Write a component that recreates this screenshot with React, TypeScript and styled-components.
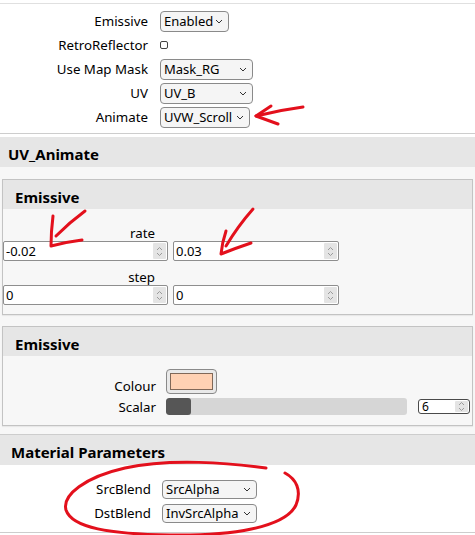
import React from "react";
import styled, { createGlobalStyle } from "styled-components";

const GlobalStyle = createGlobalStyle`
  html, body { margin: 0; padding: 0; background: #fff; }
  body {
    font-family: "Noto Sans", "Open Sans", sans-serif;
    font-size: 13px;
    color: #000;
  }
  * { box-sizing: border-box; }
`;

const Page = styled.div`
  position: relative;
  width: 475px;
  height: 535px;
  padding-top: 3px;
  overflow: hidden;
  background: #fff;
`;

const TopSection = styled.div`
  border-top: 1px solid #e0e0e0;
  border-bottom: 1px solid #cdcdcd;
  padding: 5px 0 4px;
  background: #fff;
`;

const FieldRow = styled.div<{ $labelW: number; $gap: number }>`
  display: grid;
  grid-template-columns: ${(p) => p.$labelW}px auto;
  column-gap: ${(p) => p.$gap}px;
  align-items: center;
  height: 24px;
`;

const Label = styled.span<{ $end?: boolean }>`
  text-align: right;
  white-space: nowrap;
  line-height: 16px;
  font-size: 13.3px;
  align-self: ${(p) => (p.$end ? "end" : "center")};
`;

const SelectBox = styled.div<{ $w: number; $h: number }>`
  display: flex;
  align-items: center;
  justify-content: space-between;
  width: ${(p) => p.$w}px;
  height: ${(p) => p.$h}px;
  border: 1px solid #8a8a8a;
  border-radius: 4px;
  background: #f5f5f5;
  padding: 0 5px 0 3px;
  font-size: 13px;
  line-height: 1;
  white-space: nowrap;
`;

const Check = styled.span`
  display: block;
  width: 8px;
  height: 8px;
  border: 1px solid #444;
  border-radius: 2px;
  background: #fff;
`;

const Section = styled.div<{ $gapTop?: number }>`
  padding-top: ${(p) => p.$gapTop ?? 0}px;
  background: #fff;
`;

const SectionHeader = styled.div<{ $indent: number }>`
  display: flex;
  align-items: center;
  height: 30px;
  padding: 4px ${(p) => p.$indent}px 0;
  background: #e6e6e6;
  font-weight: 700;
  font-size: 15px;
`;

const SectionBody = styled.div`
  display: flex;
  flex-direction: column;
  gap: 11px;
  padding: 12px 2px 8px;
  background: #f7f7f7;
`;

const MaterialSection = styled.div`
  border-top: 1px solid #cdcdcd;
  border-bottom: 1px solid #cdcdcd;
  background: #fff;
`;

const MaterialBody = styled.div`
  padding: 12px 0 7px;
`;

const Box = styled.div`
  border: 1px solid #c3c3c3;
  background: #f7f7f7;
  box-shadow: 0 1px 1px rgba(0, 0, 0, 0.06);
`;

const BoxHeader = styled.div`
  display: flex;
  align-items: center;
  height: 29px;
  padding: 4px 12px 0;
  background: #e6e6e6;
  font-weight: 700;
  font-size: 15px;
`;

const RateBody = styled.div`
  display: flex;
  flex-direction: column;
  gap: 8px;
  padding: 16px 0 9px;
`;

const ParamGroup = styled.div`
  display: flex;
  flex-direction: column;
`;

const ParamLabel = styled.div`
  width: 152px;
  text-align: right;
  line-height: 16px;
  font-size: 13.3px;
`;

const InputPair = styled.div`
  display: flex;
  gap: 5px;
`;

const NumberBox = styled.div<{ $w: number; $h: number; $small?: boolean }>`
  display: flex;
  align-items: center;
  justify-content: space-between;
  width: ${(p) => p.$w}px;
  height: ${(p) => p.$h}px;
  border: 1px solid ${(p) => (p.$small ? "#4a4a4a" : "#8e8e8e")};
  border-radius: ${(p) => (p.$small ? 3 : 2)}px;
  background: #fff;
  padding: 0 1px 0 ${(p) => (p.$small ? 3 : 2)}px;
  font-size: ${(p) => (p.$small ? 12 : 13)}px;
  line-height: 1;
`;

const Spinner = styled.span<{ $h: number }>`
  display: flex;
  align-items: center;
  justify-content: center;
  width: 13px;
  height: ${(p) => p.$h}px;
  background: #e4e4e4;
  border-radius: 1px;
`;

const ColourBody = styled.div`
  display: grid;
  grid-template-columns: 153px 1fr;
  column-gap: 10px;
  row-gap: 4px;
  padding: 13px 2px 10px 0;
`;

const Swatch = styled.div`
  width: 51px;
  height: 25px;
  border: 1px solid #8a8a8a;
  border-radius: 4px;
  background: #e9e9e9;
  padding: 3px;
`;

const SwatchFill = styled.div<{ $color: string }>`
  width: 100%;
  height: 100%;
  background: ${(p) => p.$color};
  border: 1px solid #806858;
`;

const SliderRow = styled.div`
  display: flex;
  align-items: center;
  gap: 11px;
  height: 17px;
`;

const Track = styled.div`
  flex: 1;
  height: 17px;
  background: #d6d6d6;
  border-radius: 3px;
  overflow: hidden;
  display: flex;
`;

const Thumb = styled.div`
  width: 25px;
  height: 100%;
  background: #565656;
  border-radius: 3px;
`;

const Overlay = styled.svg`
  position: absolute;
  left: 0;
  top: 0;
  pointer-events: none;
`;

const Chevron = () => (
  <svg width="8" height="5" viewBox="0 0 8 5">
    <path d="M1 1 L4 4 L7 1" fill="none" stroke="#333" strokeWidth="1" />
  </svg>
);

const SpinGlyph = () => (
  <svg width="7" height="11" viewBox="0 0 7 11">
    <path d="M1 4 L3.5 1.5 L6 4 M1 7 L3.5 9.5 L6 7" fill="none" stroke="#9a9a9a" strokeWidth="1" />
  </svg>
);

const Select = ({ value, w, h }: { value: string; w: number; h: number }) => (
  <SelectBox $w={w} $h={h}>
    <span>{value}</span>
    <Chevron />
  </SelectBox>
);

const NumberInput = ({ value, w, h, small }: { value: string; w: number; h: number; small?: boolean }) => (
  <NumberBox $w={w} $h={h} $small={small}>
    <span>{value}</span>
    <Spinner $h={h - 4}>
      <SpinGlyph />
    </Spinner>
  </NumberBox>
);

const topFields: { label: string; value?: string; w?: number; check?: boolean }[] = [
  { label: "Emissive", value: "Enabled", w: 69 },
  { label: "RetroReflector", check: true },
  { label: "Use Map Mask", value: "Mask_RG", w: 93 },
  { label: "UV", value: "UV_B", w: 93 },
  { label: "Animate", value: "UVW_Scroll", w: 90 },
];

const rateGroups = [
  { label: "rate", values: ["-0.02", "0.03"] },
  { label: "step", values: ["0", "0"] },
];

export default function App() {
  return (
    <>
      <GlobalStyle />
      <Page>
        <TopSection>
          {topFields.map((f) => (
            <FieldRow key={f.label} $labelW={148} $gap={12}>
              <Label>{f.label}</Label>
              {f.check ? <Check /> : <Select value={f.value!} w={f.w!} h={21} />}
            </FieldRow>
          ))}
        </TopSection>

        <Section $gapTop={3}>
          <SectionHeader $indent={8}>UV_Animate</SectionHeader>
          <SectionBody>
            <Box>
              <BoxHeader>Emissive</BoxHeader>
              <RateBody>
                {rateGroups.map((g) => (
                  <ParamGroup key={g.label}>
                    <ParamLabel>{g.label}</ParamLabel>
                    <InputPair>
                      <NumberInput value={g.values[0]} w={165} h={20} />
                      <NumberInput value={g.values[1]} w={166} h={20} />
                    </InputPair>
                  </ParamGroup>
                ))}
              </RateBody>
            </Box>
            <Box>
              <BoxHeader>Emissive</BoxHeader>
              <ColourBody>
                <Label $end>Colour</Label>
                <Swatch>
                  <SwatchFill $color="#ffd1b3" />
                </Swatch>
                <Label>Scalar</Label>
                <SliderRow>
                  <Track>
                    <Thumb />
                  </Track>
                  <NumberInput value="6" w={52} h={15} small />
                </SliderRow>
              </ColourBody>
            </Box>
          </SectionBody>
        </Section>

        <MaterialSection>
          <SectionHeader $indent={11}>Material Parameters</SectionHeader>
          <MaterialBody>
            <FieldRow $labelW={151} $gap={11}>
              <Label>SrcBlend</Label>
              <Select value="SrcAlpha" w={95} h={19} />
            </FieldRow>
            <FieldRow $labelW={151} $gap={11}>
              <Label>DstBlend</Label>
              <Select value="InvSrcAlpha" w={95} h={19} />
            </FieldRow>
          </MaterialBody>
        </MaterialSection>

        <Overlay width="475" height="535" viewBox="0 0 475 535">
          <g fill="none" stroke="#e3101c" strokeWidth="3" strokeLinecap="round" strokeLinejoin="round">
            <path d="M271 106 L256 116 L278 124" />
            <path d="M256 116 Q280 110 303 107" />
            <path d="M85 211 Q70 222 56 236" />
            <path d="M53 216 Q51 232 51 246 Q66 242 82 240" />
            <path d="M253 209 Q238 226 226 246" />
            <path d="M226 231 Q222 243 221 254 Q236 248 251 243" />
            <path d="M266 468 C230 463 170 458 125 468 C85 477 62 495 66 510 C72 528 110 534 170 535 C230 536 285 528 296 505 C302 490 296 479 285 473" />
          </g>
        </Overlay>
      </Page>
    </>
  );
}
